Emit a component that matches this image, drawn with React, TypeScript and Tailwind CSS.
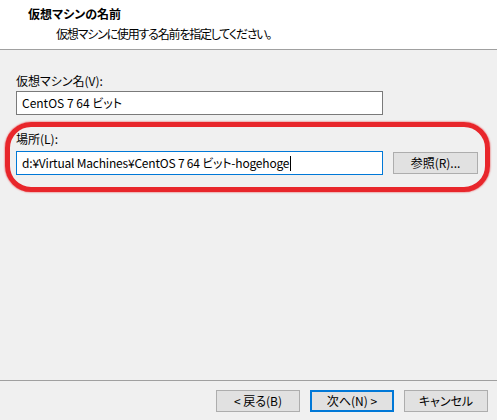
import React from "react";

const font = {
  fontFamily: '"Noto Sans CJK JP", "Noto Sans", sans-serif',
};

function Button({
  children,
  primary,
  className = "",
}: {
  children: React.ReactNode;
  primary?: boolean;
  className?: string;
}) {
  return (
    <button
      className={
        "h-[22px] bg-[#e1e1e1] text-[12px] leading-none text-black flex items-center justify-center [font-feature-settings:'palt'] " +
        (primary ? "border-2 border-[#0078d7] " : "border border-[#adadad] ") +
        className
      }
      style={font}
    >
      {children}
    </button>
  );
}

export default function App() {
  return (
    <div
      className="w-[497px] h-[420px] bg-[#f0f0f0] flex flex-col text-black [font-feature-settings:'palt']"
      style={font}
    >
      {/* Wizard header */}
      <div className="h-[49px] bg-white flex flex-col pl-[28px] pt-[5px]">
        <div className="text-[12px] leading-[18px] font-bold">仮想マシンの名前</div>
        <div className="text-[12px] leading-[18px] pl-[28px] pt-[2px] tracking-[-1.2px]">
          仮想マシンに使用する名前を指定してください。
        </div>
      </div>
      <div className="h-px bg-[#a0a0a0]" />

      {/* Form body */}
      <div className="flex-1 flex flex-col pt-[23px]">
        <div className="pl-[16px]">
          <div className="text-[12px] leading-[16px] mb-[2px]">仮想マシン名(V):</div>
          <div className="w-[367px] h-[24px] bg-white border border-[#7a7a7a] flex items-center pl-[5px] text-[12px]">
            CentOS 7 64 ビット
          </div>
        </div>

        <div className="ml-[5px] mt-[7px] w-[485px] h-[70px] border-[5px] border-[#e8262b] rounded-[26px] shadow-[0_0_2px_#e8262b] pl-[6px] pt-[4px]">
          <div className="text-[12px] leading-[16px] mb-[4px]">場所(L):</div>
          <div className="flex items-start gap-[10px]">
            <div className="w-[367px] h-[24px] bg-white border border-[#0078d7] flex items-center pl-[5px] text-[12px] whitespace-nowrap tracking-[-0.2px]">
              d:¥Virtual Machines¥CentOS 7 64 ビット-hogehoge
              <span className="inline-block w-px h-[15px] bg-black ml-px" />
            </div>
            <Button className="w-[85px] mt-px">参照(R)...</Button>
          </div>
        </div>
      </div>

      {/* Footer */}
      <div className="h-px bg-[#a0a0a0]" />
      <div className="h-[39px] flex justify-end items-start gap-[10px] pt-[9px] pr-[9px]">
        <Button className="w-[84px]">&lt; 戻る(B)</Button>
        <Button primary className="w-[84px]">次へ(N) &gt;</Button>
        <Button className="w-[84px]">キャンセル</Button>
      </div>
    </div>
  );
}
